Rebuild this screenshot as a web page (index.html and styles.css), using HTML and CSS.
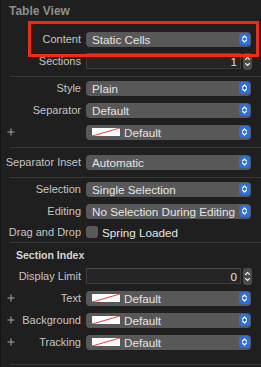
FILE: index.html
```html
<!DOCTYPE html>
<html>
<head>
<meta charset="utf-8">
<link rel="stylesheet" href="styles.css">
</head>
<body>
<div class="panel">
  <div class="title">Table View</div>
  <div class="rows first">
    <div class="row">
      <div class="label"><span class="ltext">Content</span></div>
      <div class="popup"><span class="val">Static Cells</span><span class="arrows"><svg width="11" height="12" viewBox="0 0 11 12"><path d="M3.5 5 L5.5 3 L7.5 5 M3.5 7 L5.5 9 L7.5 7" fill="none" stroke="#fff" stroke-width="1.2" stroke-linecap="round" stroke-linejoin="round"/></svg></span></div>
    </div>
    <div class="row">
      <div class="label"><span class="ltext">Sections</span></div>
      <div class="field"><span class="num">1</span></div>
      <div class="stepper"><svg width="9" height="17" viewBox="0 0 9 17"><path d="M2.5 6.5 L4.5 4.5 L6.5 6.5 M2.5 10.5 L4.5 12.5 L6.5 10.5" fill="none" stroke="#e6e6e6" stroke-width="1.1" stroke-linecap="round" stroke-linejoin="round"/></svg></div>
    </div>
  </div>
  <div class="divider d4"></div>
  <div class="rows">
    <div class="row">
      <div class="label"><span class="ltext">Style</span></div>
      <div class="popup"><span class="val">Plain</span><span class="arrows"><svg width="11" height="12" viewBox="0 0 11 12"><path d="M3.5 5 L5.5 3 L7.5 5 M3.5 7 L5.5 9 L7.5 7" fill="none" stroke="#fff" stroke-width="1.2" stroke-linecap="round" stroke-linejoin="round"/></svg></span></div>
    </div>
    <div class="row">
      <div class="label"><span class="ltext">Separator</span></div>
      <div class="popup"><span class="val">Default</span><span class="arrows"><svg width="11" height="12" viewBox="0 0 11 12"><path d="M3.5 5 L5.5 3 L7.5 5 M3.5 7 L5.5 9 L7.5 7" fill="none" stroke="#fff" stroke-width="1.2" stroke-linecap="round" stroke-linejoin="round"/></svg></span></div>
    </div>
    <div class="row">
      <div class="label"><span class="plus"><svg width="8" height="8" viewBox="0 0 8 8"><path d="M4 0.5 V7.5 M0.5 4 H7.5" stroke="#a8a8a8" stroke-width="1"/></svg></span></div>
      <div class="popup"><span class="well"><svg width="28" height="8" viewBox="0 0 28 8"><rect width="28" height="8" fill="#fff"/><path d="M0 8 L28 0" stroke="#f03a3a" stroke-width="1"/></svg></span><span class="val">Default</span><span class="arrows"><svg width="11" height="12" viewBox="0 0 11 12"><path d="M3.5 5 L5.5 3 L7.5 5 M3.5 7 L5.5 9 L7.5 7" fill="none" stroke="#fff" stroke-width="1.2" stroke-linecap="round" stroke-linejoin="round"/></svg></span></div>
    </div>
  </div>
  <div class="divider d4"></div>
  <div class="rows inset">
    <div class="row">
      <div class="label"><span class="ltext">Separator Inset</span></div>
      <div class="popup"><span class="val">Automatic</span><span class="arrows"><svg width="11" height="12" viewBox="0 0 11 12"><path d="M3.5 5 L5.5 3 L7.5 5 M3.5 7 L5.5 9 L7.5 7" fill="none" stroke="#fff" stroke-width="1.2" stroke-linecap="round" stroke-linejoin="round"/></svg></span></div>
    </div>
  </div>
  <div class="divider d4"></div>
  <div class="rows">
    <div class="row">
      <div class="label"><span class="ltext">Selection</span></div>
      <div class="popup"><span class="val">Single Selection</span><span class="arrows"><svg width="11" height="12" viewBox="0 0 11 12"><path d="M3.5 5 L5.5 3 L7.5 5 M3.5 7 L5.5 9 L7.5 7" fill="none" stroke="#fff" stroke-width="1.2" stroke-linecap="round" stroke-linejoin="round"/></svg></span></div>
    </div>
    <div class="row">
      <div class="label"><span class="ltext">Editing</span></div>
      <div class="popup"><span class="val">No Selection During Editing</span><span class="arrows"><svg width="11" height="12" viewBox="0 0 11 12"><path d="M3.5 5 L5.5 3 L7.5 5 M3.5 7 L5.5 9 L7.5 7" fill="none" stroke="#fff" stroke-width="1.2" stroke-linecap="round" stroke-linejoin="round"/></svg></span></div>
    </div>
    <div class="row short">
      <div class="label"><span class="ltext">Drag and Drop</span></div>
      <span class="check"></span><span class="checktext">Spring Loaded</span>
    </div>
  </div>
  <div class="divider"></div>
  <div class="subtitle">Section Index</div>
  <div class="rows">
    <div class="row">
      <div class="label"><span class="ltext">Display Limit</span></div>
      <div class="field"><span class="num">0</span></div>
      <div class="stepper"><svg width="9" height="17" viewBox="0 0 9 17"><path d="M2.5 6.5 L4.5 4.5 L6.5 6.5 M2.5 10.5 L4.5 12.5 L6.5 10.5" fill="none" stroke="#e6e6e6" stroke-width="1.1" stroke-linecap="round" stroke-linejoin="round"/></svg></div>
    </div>
    <div class="row">
      <div class="label"><span class="plus"><svg width="8" height="8" viewBox="0 0 8 8"><path d="M4 0.5 V7.5 M0.5 4 H7.5" stroke="#a8a8a8" stroke-width="1"/></svg></span><span class="ltext">Text</span></div>
      <div class="popup"><span class="well"><svg width="28" height="8" viewBox="0 0 28 8"><rect width="28" height="8" fill="#fff"/><path d="M0 8 L28 0" stroke="#f03a3a" stroke-width="1"/></svg></span><span class="val">Default</span><span class="arrows"><svg width="11" height="12" viewBox="0 0 11 12"><path d="M3.5 5 L5.5 3 L7.5 5 M3.5 7 L5.5 9 L7.5 7" fill="none" stroke="#fff" stroke-width="1.2" stroke-linecap="round" stroke-linejoin="round"/></svg></span></div>
    </div>
    <div class="row">
      <div class="label"><span class="plus"><svg width="8" height="8" viewBox="0 0 8 8"><path d="M4 0.5 V7.5 M0.5 4 H7.5" stroke="#a8a8a8" stroke-width="1"/></svg></span><span class="ltext">Background</span></div>
      <div class="popup"><span class="well"><svg width="28" height="8" viewBox="0 0 28 8"><rect width="28" height="8" fill="#fff"/><path d="M0 8 L28 0" stroke="#f03a3a" stroke-width="1"/></svg></span><span class="val">Default</span><span class="arrows"><svg width="11" height="12" viewBox="0 0 11 12"><path d="M3.5 5 L5.5 3 L7.5 5 M3.5 7 L5.5 9 L7.5 7" fill="none" stroke="#fff" stroke-width="1.2" stroke-linecap="round" stroke-linejoin="round"/></svg></span></div>
    </div>
    <div class="row">
      <div class="label"><span class="plus"><svg width="8" height="8" viewBox="0 0 8 8"><path d="M4 0.5 V7.5 M0.5 4 H7.5" stroke="#a8a8a8" stroke-width="1"/></svg></span><span class="ltext">Tracking</span></div>
      <div class="popup"><span class="well"><svg width="28" height="8" viewBox="0 0 28 8"><rect width="28" height="8" fill="#fff"/><path d="M0 8 L28 0" stroke="#f03a3a" stroke-width="1"/></svg></span><span class="val">Default</span><span class="arrows"><svg width="11" height="12" viewBox="0 0 11 12"><path d="M3.5 5 L5.5 3 L7.5 5 M3.5 7 L5.5 9 L7.5 7" fill="none" stroke="#fff" stroke-width="1.2" stroke-linecap="round" stroke-linejoin="round"/></svg></span></div>
    </div>
  </div>
  <div class="divider d11"></div>
  <div class="annotation"></div>
</div>
</body>
</html>
```

FILE: styles.css
```css
html, body {
  margin: 0;
  padding: 0;
  background: #1f1f1f;
}
body {
  width: 261px;
  height: 367px;
  overflow: hidden;
  font-family: "Liberation Sans", Arial, sans-serif;
}
.panel {
  position: relative;
  height: 367px;
  border-left: 1px solid #141414;
  box-sizing: border-box;
  background: #1f1f1f;
}
.title {
  height: 22px;
  line-height: 22px;
  padding-left: 8px;
  font-size: 12px;
  font-weight: bold;
  color: #8e8e8e;
}
.rows.first {
  padding-top: 6px;
}
.rows.inset {
  padding-top: 3px;
}
.row {
  display: flex;
  align-items: center;
  height: 22px;
}
.row.short {
  height: 20px;
}
.label {
  width: 80px;
  flex: none;
  display: flex;
  align-items: center;
  font-size: 11px;
  color: #c6c6c6;
  white-space: nowrap;
}
.ltext {
  margin-left: auto;
}
.plus {
  display: flex;
  margin-left: 6px;
}
.popup {
  margin-left: 5px;
  width: 165px;
  height: 15px;
  box-sizing: border-box;
  background: #585858;
  border-radius: 4px;
  display: flex;
  align-items: center;
  padding-left: 6px;
}
.val {
  flex: 1;
  font-size: 11.7px;
  color: #e4e4e4;
  white-space: nowrap;
  overflow: hidden;
}
.arrows {
  flex: none;
  width: 11px;
  height: 12px;
  margin-right: 1.5px;
  border-radius: 3px;
  background: #2a6fe3;
  display: flex;
}
.well {
  display: flex;
  margin-right: 4px;
}
.field {
  margin-left: 5px;
  width: 155px;
  height: 16px;
  box-sizing: border-box;
  background: #252525;
  border: 1px solid #3c3c3c;
  border-top-color: #4a4a4a;
  display: flex;
  align-items: center;
  justify-content: flex-end;
  padding-right: 3px;
}
.num {
  font-size: 11.7px;
  color: #e0e0e0;
}
.stepper {
  margin-left: 2px;
  width: 9px;
  height: 17px;
  border-radius: 3px;
  background: #4b4b4b;
  display: flex;
}
.check {
  margin-left: 5px;
  width: 12px;
  height: 12px;
  border-radius: 3px;
  background: #595959;
  flex: none;
}
.checktext {
  margin-left: 4px;
  font-size: 11.7px;
  color: #e4e4e4;
}
.divider {
  height: 1px;
  margin-left: 9px;
  background: #383838;
}
.d4 {
  margin-top: 4px;
}
.d11 {
  margin-top: 11px;
}
.subtitle {
  margin-top: 2px;
  height: 20px;
  line-height: 20px;
  padding-left: 15px;
  font-size: 10.5px;
  font-weight: bold;
  color: #d6d6d6;
}
.annotation {
  position: absolute;
  left: 27px;
  top: 21px;
  width: 231px;
  height: 36px;
  box-sizing: border-box;
  border: 3px solid #f42a10;
}
```
